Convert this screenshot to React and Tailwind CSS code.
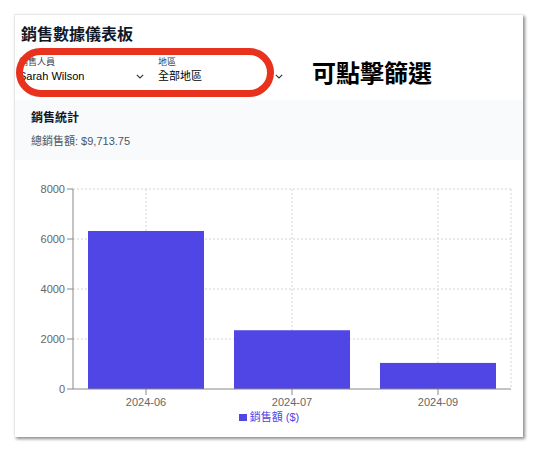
import React from "react";

const sales = [
  { month: "2024-06", amount: 6320.5 },
  { month: "2024-07", amount: 2350.25 },
  { month: "2024-09", amount: 1043 },
];

const font = { fontFamily: '"Liberation Sans", "Noto Sans CJK TC", sans-serif' };

function Chevron() {
  return (
    <svg width="8" height="5" viewBox="0 0 8 5" className="shrink-0">
      <polyline points="0.8,0.8 4,4 7.2,0.8" fill="none" stroke="#333" strokeWidth="1.1" />
    </svg>
  );
}

function FakeSelect({ label, value }) {
  return (
    <div className="w-[127px] flex flex-col">
      <span className="text-[9px] leading-[12px] text-gray-700">{label}</span>
      <div className="flex items-center justify-between pr-[2px] h-[16px]">
        <span className="text-[11px] leading-[16px] text-black">{value}</span>
        <Chevron />
      </div>
    </div>
  );
}

function SalesChart() {
  // svg x = page x - 14, svg y = page y - 170
  const left = 58;
  const right = 496;
  const top = 19;
  const bottom = 219;
  const max = 8000;
  const ticks = [0, 2000, 4000, 6000, 8000];
  const band = (right - left) / sales.length;
  const y = (v) => bottom - (v / max) * (bottom - top);

  return (
    <svg width="509" height="240" className="block">
      {ticks.slice(1).map((t) => (
        <line key={"h" + t} x1={left} x2={right} y1={y(t)} y2={y(t)} stroke="#d4d4d4" strokeDasharray="2 2" />
      ))}
      {sales.map((s, i) => (
        <line key={"v" + i} x1={left + band * i + band / 2} x2={left + band * i + band / 2} y1={top} y2={bottom} stroke="#d4d4d4" strokeDasharray="2 2" />
      ))}
      <line x1={right} x2={right} y1={top} y2={bottom} stroke="#d4d4d4" strokeDasharray="2 2" />
      {sales.map((s, i) => (
        <rect key={s.month} x={left + band * i + 15} y={y(s.amount)} width={band - 30} height={bottom - y(s.amount)} fill="#4f46e5" />
      ))}
      <line x1={left} x2={left} y1={top} y2={bottom} stroke="#888" />
      <line x1={left} x2={right} y1={bottom} y2={bottom} stroke="#888" />
      {ticks.map((t) => (
        <g key={t}>
          <line x1={left - 6} x2={left} y1={y(t)} y2={y(t)} stroke="#888" />
          <text x={left - 8} y={y(t) + 4} textAnchor="end" fontSize="11" fill="#666" style={font}>
            {t}
          </text>
        </g>
      ))}
      {sales.map((s, i) => (
        <g key={"t" + s.month}>
          <line x1={left + band * i + band / 2} x2={left + band * i + band / 2} y1={bottom} y2={bottom + 6} stroke="#888" />
          <text x={left + band * i + band / 2} y={bottom + 17} textAnchor="middle" fontSize="11" fill="#666" style={font}>
            {s.month}
          </text>
        </g>
      ))}
    </svg>
  );
}

export default function App() {
  const total = sales.reduce((sum, s) => sum + s.amount, 0);

  return (
    <div className="w-[549px] h-[454px] bg-white pt-[14px] pl-[14px]" style={font}>
      <div className="relative w-[509px] h-[423px] bg-white border-l border-t border-gray-200 shadow-[2px_2px_3px_rgba(0,0,0,0.45)]">
        <h1 className="pl-[6px] pt-[8px] text-[16px] leading-[24px] font-bold text-gray-900">銷售數據儀表板</h1>

        <div className="flex items-start h-[44px] mt-[9px] pl-[4px]">
          <div className="flex gap-[12px]">
            <FakeSelect label="銷售人員" value="Sarah Wilson" />
            <FakeSelect label="地區" value="全部地區" />
          </div>
          <span className="ml-[27px] mt-[3px] text-[24px] leading-[30px] font-bold text-black">可點擊篩選</span>
        </div>

        {/* annotation ring */}
        <div className="absolute left-[1px] top-[33px] w-[258px] h-[49px] rounded-full border-[7px] border-[#e8321e]" />

        <div className="bg-[#f9fafb] pl-[16px] pt-[10px] pb-[11px]">
          <h2 className="text-[12px] leading-[16px] font-bold text-gray-900">銷售統計</h2>
          <p className="mt-[7px] text-[11px] leading-[16px] text-gray-600">
            總銷售額: ${total.toLocaleString("en-US", { minimumFractionDigits: 2 })}
          </p>
        </div>

        <div className="mt-[10px]">
          <SalesChart />
          <div className="flex items-center justify-center gap-[3px] h-[14px]">
            <span className="w-[8px] h-[7px] bg-[#4f46e5]" />
            <span className="text-[11px] leading-[14px] text-[#4f46e5]">銷售額 ($)</span>
          </div>
        </div>
      </div>
    </div>
  );
}
